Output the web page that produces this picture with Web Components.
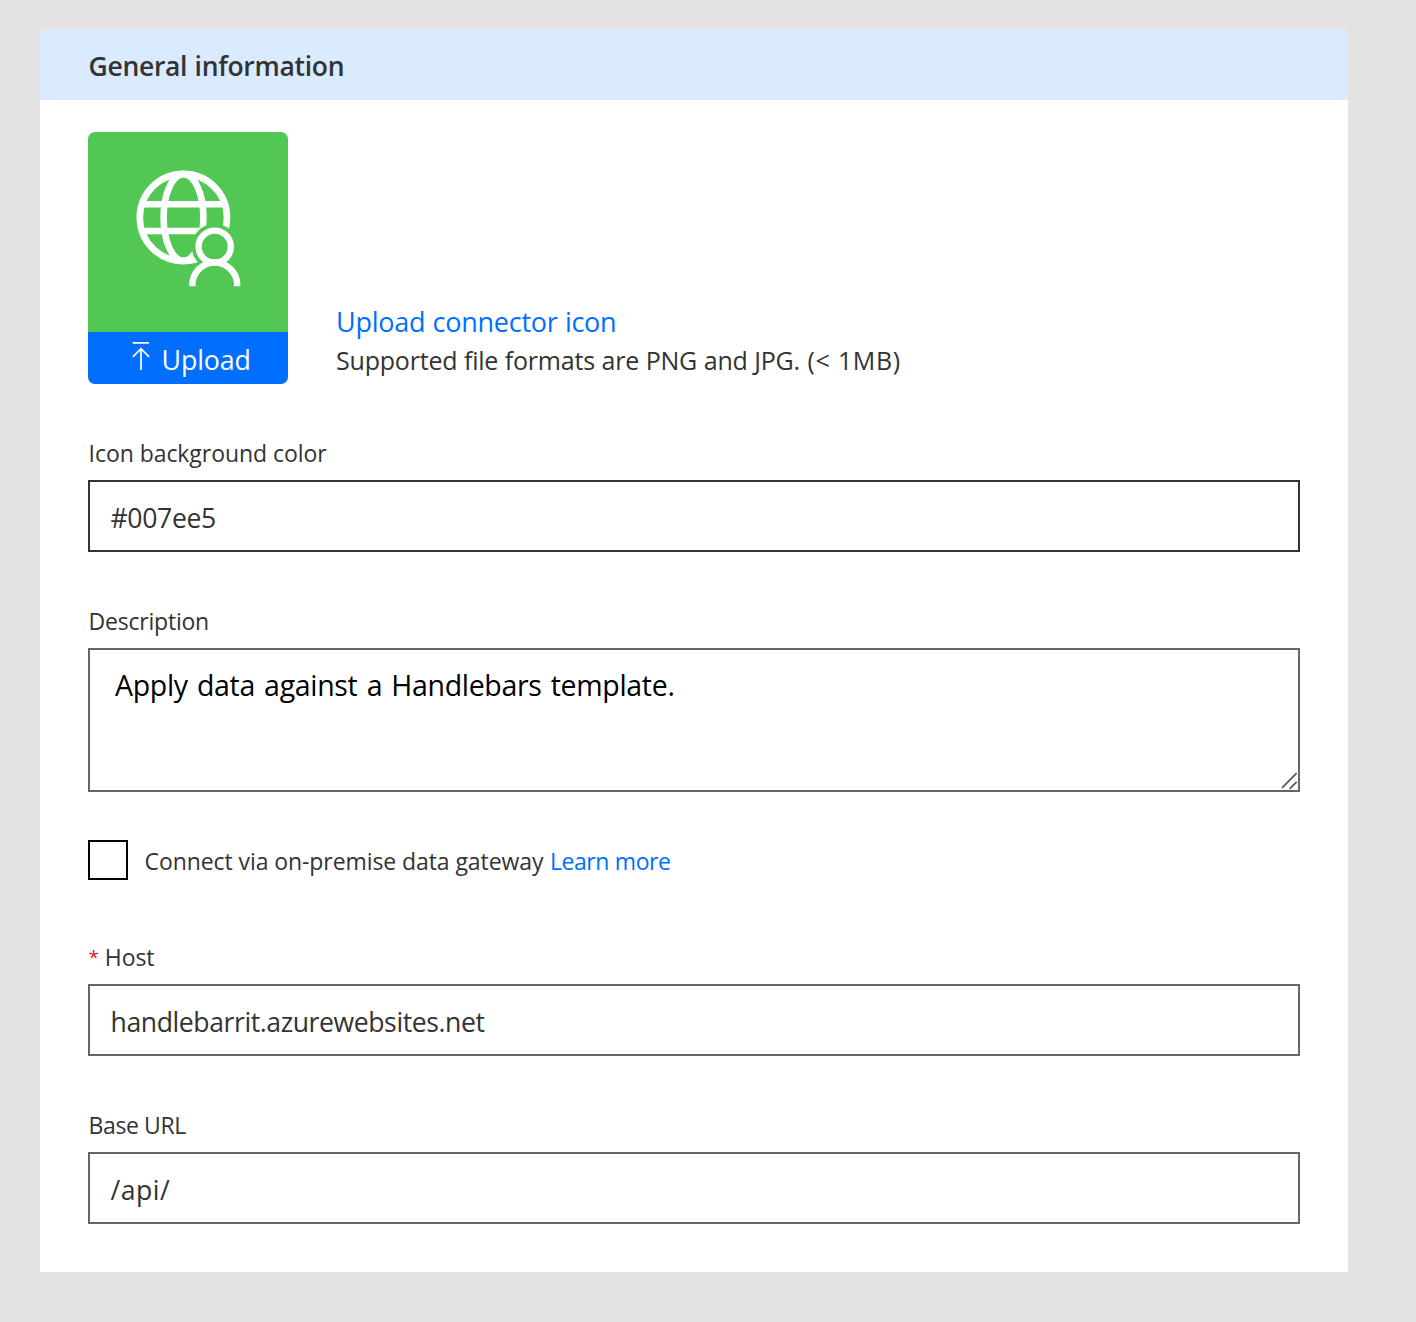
<!DOCTYPE html>
<html lang="en">
<head>
<meta charset="utf-8">
<title>General information</title>
<style>
body{margin:0;background:#e3e3e3;font-family:"Open Sans","Noto Sans",sans-serif;color:#333}
</style>
</head>
<body>
<info-page></info-page>
<script>
const define = (name, html) => customElements.define(name, class extends HTMLElement {
  constructor() {
    super();
    const t = document.createElement('template');
    t.innerHTML = html;
    this.attachShadow({mode: 'open'}).append(t.content.cloneNode(true));
  }
});

define('connector-icon', `
<style>:host{display:block;height:200px;background:#52c754}svg{display:block}</style>
<svg width="200" height="200" viewBox="88 132 200 200" fill="none" stroke="#fff">
  <mask id="cut" maskUnits="userSpaceOnUse" x="88" y="132" width="200" height="200">
    <rect x="88" y="132" width="200" height="200" fill="#fff" stroke="none"/>
    <circle cx="214.7" cy="246.7" r="23" fill="#000" stroke="none"/>
  </mask>
  <g mask="url(#cut)" stroke-width="6.6">
    <circle cx="183.4" cy="217.5" r="43.6"/>
    <ellipse cx="183.5" cy="217.5" rx="19.9" ry="43.4"/>
    <path d="M142 204.2H225M142 231H225"/>
  </g>
  <circle cx="214.7" cy="246.7" r="16.1" stroke-width="6.4"/>
  <path d="M192.3 286.2v-1.2a22.4 22.4 0 0 1 44.9 0v1.2" stroke-width="6.4"/>
</svg>`);

define('upload-button', `
<style>
:host{display:flex;box-sizing:border-box;height:52px;padding-left:44px;background:#006fff;color:#fff}
svg{display:block;flex:none;margin-right:11.5px}
span{font-size:26.8px;line-height:56px;letter-spacing:-.15px}
</style>
<svg width="18" height="52" viewBox="0 0 18 52" fill="none" stroke="#fff" stroke-width="1.7"><path d="M.7 10.8H17M9 38V16.8M.9 24.8L9 16.6L17.1 24.8"/></svg>
<span><slot></slot></span>`);

define('upload-section', `
<style>
:host{display:flex;align-items:flex-end;gap:48px;height:252px}
.tile{width:200px;border-radius:7px;overflow:hidden}
.text{padding-bottom:4px}
a{display:block;color:#006fff;font-size:27px;line-height:39px;letter-spacing:-.26px;word-spacing:.6px}
p{margin:0;font-size:25px;line-height:39px;letter-spacing:-.2px;word-spacing:.3px}
p span{letter-spacing:.65px;margin-left:1px}
</style>
<div class="tile"><connector-icon></connector-icon><upload-button>Upload</upload-button></div>
<div class="text"><a>Upload connector icon</a><p>Supported file formats are PNG and JPG. <span>(&lt; 1MB)</span></p></div>`);

define('form-field', `
<style>
:host{display:block}
.label{height:48px;padding-left:.6px;font-size:23px;line-height:43px;letter-spacing:var(--label-spacing,0)}
.box{box-sizing:border-box;height:72px;border:2px solid var(--edge,#666);padding:3px 20.5px 0;font-size:26.6px;line-height:67px;letter-spacing:var(--value-spacing,0)}
::slotted([slot=mark]){color:#f0141e;font-size:19px;line-height:1;vertical-align:2px;margin-right:1px}
</style>
<div class="label"><slot name="mark"></slot><slot name="label"></slot></div>
<div class="box" role="textbox"><slot></slot></div>`);

define('form-area', `
<style>
:host{display:block}
.label{height:48px;padding-left:.6px;font-size:23px;line-height:43px;letter-spacing:-.22px}
.box{box-sizing:border-box;display:flex;justify-content:space-between;height:144px;border:2px solid #666;padding:15px 0 0 25px;color:#000;font-size:28.5px;line-height:41px;letter-spacing:-.32px;word-spacing:2.1px}
svg{align-self:flex-end;display:block}
</style>
<div class="label"><slot name="label"></slot></div>
<div class="box" role="textbox"><span><slot></slot></span>
<svg width="18" height="20" viewBox="1280 770 18 20" stroke="#555" stroke-width="1.7"><path d="M1282 787.8L1296.7 773.2M1289.6 788.8L1296.7 781.9"/></svg></div>`);

define('check-row', `
<style>
:host{display:flex;height:40px;gap:16.5px;font-size:23px;line-height:43px;letter-spacing:-.08px}
i{box-sizing:border-box;width:40px;height:40px;border:2px solid #000}
span{white-space:pre}
::slotted(a){color:#006fff;letter-spacing:-.5px;word-spacing:.6px;margin-left:.8px}
</style>
<i role="checkbox" aria-checked="false"></i><span><slot></slot></span>`);

define('info-card', `
<style>
:host{display:block;width:1308px;height:1242px;background:#fff}
header{height:70px;background:#dbebff;padding-left:48.5px;font-size:26.5px;font-weight:600;line-height:73px;letter-spacing:-.3px;word-spacing:.8px;box-sizing:border-box}
main{display:flex;flex-direction:column;gap:48px;padding:32px 48px 0}
</style>
<header><slot name="title"></slot></header><main><slot></slot></main>`);

define('info-page', `
<style>
:host{display:block;box-sizing:border-box;height:1322px;padding:30px 0 0 40px;overflow:hidden}
.host{margin-top:8px}
</style>
<info-card>
  <span slot="title">General information</span>
  <upload-section></upload-section>
  <form-field style="--edge:#333;--label-spacing:-.06px;--value-spacing:-.35px"><span slot="label">Icon background color</span>#007ee5</form-field>
  <form-area><span slot="label">Description</span>Apply data against a Handlebars template.</form-area>
  <check-row>Connect via on-premise data gateway <a>Learn more</a></check-row>
  <form-field class="host" style="--label-spacing:-.1px;--value-spacing:-.42px"><span slot="mark">* </span><span slot="label">Host</span>handlebarrit.azurewebsites.net</form-field>
  <form-field style="--label-spacing:-.4px;--value-spacing:.5px"><span slot="label">Base URL</span>/api/</form-field>
</info-card>`);
</script>
</body>
</html>
